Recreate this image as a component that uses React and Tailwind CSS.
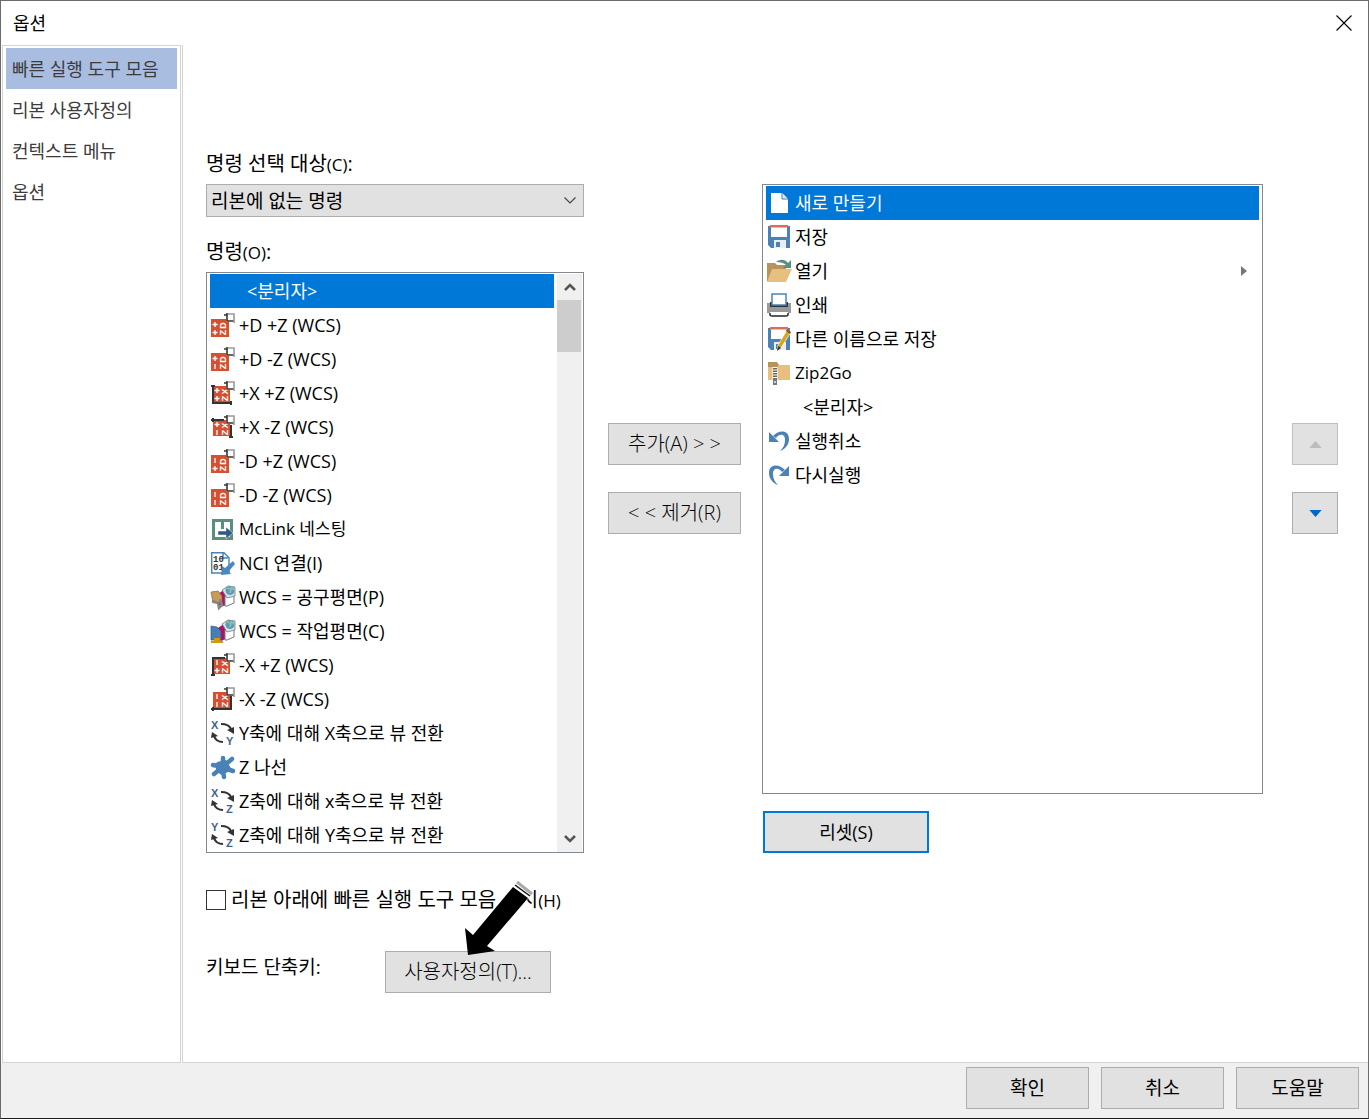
import { useState } from "react";
import clsx from "clsx";

const pages = ["빠른 실행 도구 모음", "리본 사용자정의", "컨텍스트 메뉴", "옵션"];

const commands = [
    { label: "<분리자>" },
    { label: "+D +Z (WCS)", icon: <WcsIcon top="+" bottom="+" axis="D"/> },
    { label: "+D -Z (WCS)", icon: <WcsIcon top="+" bottom="-" axis="D"/> },
    { label: "+X +Z (WCS)", icon: <WcsIcon top="+" bottom="+" axis="X" frame="M2 4V22H21M0 5H4M20 20V24"/> },
    { label: "+X -Z (WCS)", icon: <WcsIcon top="+" bottom="-" axis="X" frame="M0 5H13M20 10V23M18 22H22M2 3V7"/> },
    { label: "-D +Z (WCS)", icon: <WcsIcon top="-" bottom="+" axis="D"/> },
    { label: "-D -Z (WCS)", icon: <WcsIcon top="-" bottom="-" axis="D"/> },
    { label: "McLink 네스팅", icon: <NestingIcon />, small: true },
    { label: "NCI 연결(I)", icon: <NciIcon /> },
    { label: "WCS = 공구평면(P)", icon: <PlaneIcon tool/> },
    { label: "WCS = 작업평면(C)", icon: <PlaneIcon /> },
    { label: "-X +Z (WCS)", icon: <WcsIcon top="-" bottom="+" axis="X" frame="M14 5H2V23M0 22H4"/> },
    { label: "-X -Z (WCS)", icon: <WcsIcon top="-" bottom="-" axis="X" frame="M20 9V22H0M2 20V24"/> },
    { label: "Y축에 대해 X축으로 뷰 전환", icon: <SwapIcon from="X" to="Y"/> },
    { label: "Z 나선", icon: <HelixIcon /> },
    { label: "Z축에 대해 x축으로 뷰 전환", icon: <SwapIcon from="X" to="Z"/> },
    { label: "Z축에 대해 Y축으로 뷰 전환", icon: <SwapIcon from="Y" to="Z"/> },
];

const toolbar = [
    { label: "새로 만들기", icon: <NewIcon /> },
    { label: "저장", icon: <SaveIcon /> },
    { label: "열기", icon: <OpenIcon />, submenu: true },
    { label: "인쇄", icon: <PrintIcon /> },
    { label: "다른 이름으로 저장", icon: <SaveIcon pencil/> },
    { label: "Zip2Go", icon: <ZipIcon />, small: true },
    { label: "<분리자>" },
    { label: "실행취소", icon: <UndoIcon /> },
    { label: "다시실행", icon: <UndoIcon flip/> },
];

function Icon({ children }) {
    return <svg viewBox="0 0 24 24" className="h-6 w-6 shrink-0 overflow-visible" fill="none" aria-hidden="true">{children}</svg>;
}

function WcsIcon({ top, bottom, axis, frame }) {
    return (<Icon>
      <path d={frame ? "M2 5h17v16H2z" : "M0 6h18v18H0z"} fill="#d64f2f"/>
      {frame && <path d={frame} stroke="#333" strokeWidth="2"/>}
      <g transform={frame ? "translate(2 -2)" : undefined}>
        <g stroke="#fff" strokeWidth="1.3">
          <path d={top === "+" ? "M1.500 11.500h5M4 9v5" : "M4 9v5"}/>
          <path d={bottom === "+" ? "M1.500 19.500h5M4 17v5" : "M4 17v5"}/>
        </g>
        <g fill="#fff" fontFamily="Liberation Sans" fontSize="9" fontWeight="700" textAnchor="middle">
          <text transform="translate(15 19.500) rotate(-90)">Z</text>
          <text transform="translate(15 12.500) rotate(-90)">{axis}</text>
        </g>
      </g>
      <path d="M15 1h8v8h-8z" fill="#fff"/>
      <path d="M16 0v8h7M13 2h3" stroke="#333" strokeWidth="1.600"/>
      <path d="M17 1h6v9" stroke="#999" strokeWidth="1.600"/>
    </Icon>);
}

function NestingIcon() {
    return (<Icon>
      <path d="M1 2h21v21H1z" fill="#56917b"/>
      <path d="M4 5h6v7h3V5h6v15H4z" fill="#fff"/>
      <path d="M7 14h8v-4l7 6-7 6v-4H7z" fill="#315a84" stroke="#fff" strokeWidth=".5"/>
    </Icon>);
}

function NciIcon() {
    return (<Icon>
      <path d="M.7 1.700H13l5 5V22H.7z" fill="#fff" stroke="#4a82b8" strokeWidth="1.400"/>
      <path d="M12 2v5h5" stroke="#4a82b8" strokeWidth="1.500"/>
      <g fill="#333" fontFamily="Liberation Mono" fontSize="9" fontWeight="700">
        <text x="2" y="10.500">10</text>
        <text x="2" y="19">01</text>
      </g>
      <path d="M22 10l2 3-6 7 2 3-10 1 1-9 3 2z" fill="#4f86bd"/>
    </Icon>);
}

function PlaneIcon({ tool }) {
    return (<Icon>
      <path d="M7 9l7-5 3 3v12l-7 3-3-3z" fill="#b40f68"/>
      <path d="M14 11l9-2v9l-7 3h-2z" fill="#fff" stroke="#777" strokeWidth="1"/>
      <path d="M11 5l6-4 7 1v9l-8 2z" fill="#d5e2e7" stroke="#777" strokeWidth=".8"/>
      <circle cx="19" cy="5.500" r="4.500" fill="#5f9bb5"/>
      <path d="M16 3l4 1-1 4M20 2l3 3" stroke="#89c4b2" strokeWidth="1.500"/>
      {tool
            ? <><path d="M0 7l7-1 4 5v6l-9 1z" fill="#c89b5b" stroke="#85683e" strokeWidth=".7"/><path d="M1 16l6 2 1 5 3-3-2-6" stroke="#858585" strokeWidth="2.500"/></>
            : <><path d="M0 7l6 1 4 4v9H0z" fill="#467eb6" stroke="#31587e" strokeWidth=".7"/><path d="M0 22h3v-3h6v3h3v2H0z" fill="#d39b00"/></>}
    </Icon>);
}

function SwapIcon({ from, to }) {
    return (<Icon>
      <g fill="#3f638f" fontFamily="Liberation Sans" fontSize="11" fontWeight="700">
        <text x="0" y="8">{from}</text>
        <text x="15" y="24">{to}</text>
      </g>
      <path d="M10 3q8 0 10 5" stroke="#333" strokeWidth="2.200"/>
      <path d="M23 6v7l-7-4z" fill="#333"/>
      <path d="M12 21q-7 0-9-6" stroke="#333" strokeWidth="2.200"/>
      <path d="M0 17l1-6 6 4z" fill="#333"/>
    </Icon>);
}

function HelixIcon() {
    return (<Icon>
      <path d="M7 9l7-2 4 7-7 4-4-3z" fill="#4a82b8" stroke="#4a82b8" strokeWidth="4" strokeLinejoin="round"/>
      <path d="M12 9V3M15 9l6-5M16 14l6 2M12 16l1 6M8 15l-5 4M7 11l-5-1" stroke="#4a82b8" strokeWidth="4.500" strokeLinecap="round"/>
    </Icon>);
}

function NewIcon() {
    return (<Icon>
      <path d="M4 2h11l6 6v14H4z" fill="#fff"/>
      <path d="M15 2v6h6" stroke="#3c76b5" strokeWidth="1"/>
      <path d="M16 3l4 4h-4z" fill="#dce7f3"/>
    </Icon>);
}

function SaveIcon({ pencil }) {
    return (<Icon>
      <path d="M1 1h22v22H4l-3-3z" fill="#4a82b8"/>
      <path d="M4 1h16v11H4z" fill="#fff"/>
      <path d="M3 0h18v2.500H3z" fill="#e06c59"/>
      <path d="M7 15h12v8H7z" fill="#e9eef3"/>
      <path d="M9 17h4v5H9z" fill="#4a82b8"/>
      {pencil && (<>
        <path d="M20 3l4 2-10 16-4 3 1-6z" fill="#d9a51c" stroke="#fff" strokeWidth=".7"/>
        <path d="M20 2l4 3-1 2-4-3z" fill="#91552c"/>
        <path d="M11 19l3 2-4 3z" fill="#333"/>
      </>)}
    </Icon>);
}

function OpenIcon() {
    return (<Icon>
      <path d="M0 4h8l2 2h9v16H0z" fill="#b8945a"/>
      <path d="M5 10h20l-6 13H0z" fill="#e7c07f"/>
      <path d="M9 3c5-4 10-2 12 1l3-3v8h-8l3-3c-2-2-5-3-10-3z" fill="#56917b"/>
    </Icon>);
}

function PrintIcon() {
    return (<Icon>
      <path d="M0 10h24v10H0z" fill="#999"/>
      <path d="M3 9h18v5H3z" fill="#333"/>
      <path d="M5 1h14v11H5z" fill="#fff" stroke="#4a82b8" strokeWidth="1.500"/>
      <path d="M3 19h18v3l-2 1H5l-2-1z" fill="#fff"/>
      <path d="M3 20v2q0 1 2 1h14q2 0 2-1v-2" stroke="#222" strokeWidth="1.500"/>
    </Icon>);
}

function ZipIcon() {
    return (<Icon>
      <path d="M1 1h9l2 3h11v4H1z" fill="#b8945a"/>
      <path d="M1 6h10V4h12v15H1z" fill="#e7c07f"/>
      <path d="M8 6v13" stroke="#fff" strokeWidth="5"/>
      <path d="M8 7v11" stroke="#666" strokeWidth="4" strokeDasharray="1.500 1"/>
      <path d="M6 17h4v7H6z" fill="#777"/>
      <path d="M8 20v2" stroke="#fff" strokeWidth="1.300"/>
    </Icon>);
}

function UndoIcon({ flip }) {
    return (<Icon>
      <g transform={flip ? "translate(24 0) scale(-1 1)" : undefined}>
        <path d="M6 7C11 1 22 0 22 10c0 6-4 10-9 12 3-3 5-6 5-11 0-7-6-6-9-2z" fill="#4a82b8"/>
        <path d="M2 3v10h10z" fill="#4a82b8"/>
      </g>
    </Icon>);
}

function CommandList({ items, label, className }) {
    const [selected, setSelected] = useState(0);
    return (<ul aria-label={label} className={className}>
      {items.map((item, index) => (<li key={item.label}>
          <button type="button" aria-pressed={selected === index} onClick={() => setSelected(index)} className={clsx("flex h-[34px] w-full items-center gap-1 whitespace-nowrap pl-px text-left leading-6", item.small ? "text-[17px]" : "text-[18px]", selected === index && "bg-[#0078d7] text-white")}>
            {item.icon}
            <span className={clsx("flex-1", !item.icon && "pl-9")}>{item.label}</span>
            {item.submenu && <svg viewBox="0 0 6 10" className="mr-3 h-[10px] w-[6px]" aria-hidden="true"><path d="M0 0l6 5-6 5z" fill="#777"/></svg>}
          </button>
        </li>))}
    </ul>);
}

function Button({ className, children, ...props }) {
    return (<button type="button" className={clsx("flex h-[42px] items-center justify-center whitespace-nowrap bg-[#e1e1e1]", className)} {...props}>
      {children}
    </button>);
}

function Key({ children }) {
    return <span className="text-[17px]">({children})</span>;
}

export default function App() {
    const [page, setPage] = useState(0);
    return (<main className="flex min-h-screen flex-col border border-[#6b6b6b] border-b-[#1b1b1b] bg-white font-['Open_Sans','Noto_Sans_CJK_KR',sans-serif] text-[18px] leading-6 text-black">
      <header className="flex h-11 items-center justify-between pl-3 pr-4">
        <h1>옵션</h1>
        <button type="button" aria-label="닫기">
          <svg viewBox="0 0 16 16" className="h-4 w-4" fill="none"><path d="M.5.500l15 15M15.500.500l-15 15" stroke="#000" strokeWidth="1.100"/></svg>
        </button>
      </header>
      <div className="flex flex-1">
        <nav className="ml-px mr-px w-[179px] shrink-0 border border-[#d4d4d4] px-[3px] py-[2px]">
          {pages.map((name, index) => (<button key={name} type="button" onClick={() => setPage(index)} className={clsx("block h-[41px] w-full whitespace-nowrap pl-[6px] text-left text-[#3c3c3c]", page === index && "bg-[#a9bde0]")}>
              {name}
            </button>))}
        </nav>
        <section className="min-w-0 flex-1 border-b border-l border-[#d4d4d4] pl-[23px] pr-[30px] pt-[107px]">
          <div className="flex">
            <div className="w-[378px] shrink-0">
              <label htmlFor="source" className="block h-6 text-[20px] leading-6">명령 선택 대상<Key>C</Key>:</label>
              <div className="relative mt-2">
                <select id="source" className="h-[33px] w-full appearance-none border border-[#adadad] bg-[#e1e1e1] px-1 text-[19px]">
                  <option>리본에 없는 명령</option>
                </select>
                <svg viewBox="0 0 12 7" className="pointer-events-none absolute right-2 top-[13px] h-[7px] w-3" fill="none" aria-hidden="true"><path d="M.5.500L6 6l5.500-5.500" stroke="#444" strokeWidth="1.200"/></svg>
              </div>
              <p className="mb-2 mt-[23px] h-6 text-[20px] leading-6">명령<Key>O</Key>:</p>
              <div className="flex border border-[#828790] pl-[3px] pr-px pt-px">
                <CommandList items={commands} label="명령" className="min-w-0 flex-1"/>
                <div className="ml-[3px] flex w-[25px] flex-col bg-[#f0f0f0]">
                  <button type="button" aria-label="위로 스크롤" className="grid h-[26px] w-full place-items-center">
                    <svg viewBox="0 0 12 8" className="h-2 w-3" fill="none"><path d="M1 7l5-5 5 5" stroke="#555" strokeWidth="2.500"/></svg>
                  </button>
                  <div className="h-[52px] w-6 bg-[#cdcdcd]"/>
                  <button type="button" aria-label="아래로 스크롤" className="mt-auto grid h-[26px] w-full place-items-center">
                    <svg viewBox="0 0 12 8" className="h-2 w-3" fill="none"><path d="M1 1l5 5 5-5" stroke="#555" strokeWidth="2.500"/></svg>
                  </button>
                </div>
              </div>
            </div>
            <div className="ml-6 flex w-[133px] shrink-0 flex-col gap-[27px] pt-[271px]">
              <Button className="border border-[#adadad] text-[20px] font-light">추가(A) &gt; &gt;</Button>
              <Button className="border border-[#adadad] text-[20px] font-light">&lt; &lt; 제거(R)</Button>
            </div>
            <div className="ml-[21px] flex min-w-0 flex-1 flex-col pt-8">
              <div className="flex-1 border border-[#828790] px-[3px] py-px">
                <CommandList items={toolbar} label="빠른 실행 도구 모음"/>
              </div>
              <Button className="ml-px mt-[17px] w-[166px] border-2 border-[#0078d7]">리셋(S)</Button>
            </div>
            <div className="ml-[29px] flex w-[46px] shrink-0 flex-col gap-[27px] pt-[271px]">
              <Button disabled aria-label="위로 이동" className="border border-[#bfbfbf] bg-[#cccccc]">
                <svg viewBox="0 0 14 8" className="h-[7px] w-[13px]"><path d="M0 8l7-8 7 8z" fill="#bcbcbc"/></svg>
              </Button>
              <Button aria-label="아래로 이동" className="border border-[#adadad]">
                <svg viewBox="0 0 14 8" className="h-[7px] w-[13px]"><path d="M0 0l7 8 7-8z" fill="#0066cc"/></svg>
              </Button>
            </div>
          </div>
          <div className="relative mt-[35px] w-[378px]">
            <div className="flex h-6 items-center gap-[5px] whitespace-nowrap">
              <input id="below" type="checkbox" className="h-5 w-5 shrink-0 appearance-none border border-[#333] bg-white checked:bg-[#0078d7]"/>
              <label htmlFor="below" className="h-6 text-[20px] leading-6">리본 아래에 빠른 실행 도구 모음 표시<Key>H</Key></label>
            </div>
            <div className="mt-[39px] flex items-start">
              <label htmlFor="customize" className="w-[179px] pt-1 text-[19px] leading-6">키보드 단축키:</label>
              <Button id="customize" className="w-[166px] border border-[#adadad] text-[20px] font-light">사용자정의(T)...</Button>
            </div>
            <svg viewBox="0 0 70 78" className="pointer-events-none absolute -top-2 left-[258px] h-[78px] w-[70px]" aria-hidden="true">
              <path d="M34 8h14l7-8 15 11-15 19H34z" fill="#fff"/>
              <path d="M53 2L68 14" stroke="#aaa" strokeWidth="3"/>
              <path d="M51 5L66 16" stroke="#111" strokeWidth="1.500"/>
              <path d="M49 7L64 18 23 66l8 5-27 4L1 48l8 7z" fill="#000"/>
            </svg>
          </div>
        </section>
      </div>
      <footer className="flex justify-end gap-3 bg-[#f0f0f0] pb-[9px] pr-[9px] pt-1">
        {["확인", "취소", "도움말"].map((name) => <Button key={name} className="w-[123px] border border-[#adadad] text-[19px]">{name}</Button>)}
      </footer>
    </main>);
}
